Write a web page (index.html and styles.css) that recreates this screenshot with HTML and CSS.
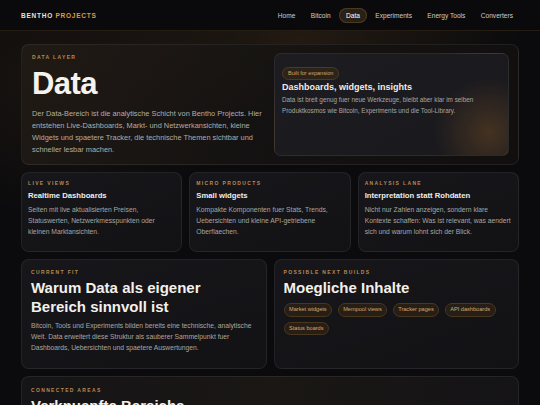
FILE: index.html
```html
<!DOCTYPE html>
<html lang="de">
<head>
<meta charset="utf-8">
<title>Data - Bentho Projects</title>
<link rel="stylesheet" href="styles.css">
</head>
<body>
<header class="topbar">
  <div class="brand">BENTHO <span class="brand-accent">PROJECTS</span></div>
  <nav class="nav">
    <a class="nav-link">Home</a>
    <a class="nav-link">Bitcoin</a>
    <a class="nav-link active">Data</a>
    <a class="nav-link">Experiments</a>
    <a class="nav-link">Energy Tools</a>
    <a class="nav-link">Converters</a>
  </nav>
</header>
<main class="page">
  <section class="card hero">
    <div class="hero-main">
      <div class="eyebrow">Data Layer</div>
      <h1 class="hero-title">Data</h1>
      <p class="hero-text">Der Data-Bereich ist die analytische Schicht von Bentho Projects. Hier entstehen Live-Dashboards, Markt- und Netzwerkansichten, kleine Widgets und spaetere Tracker, die technische Themen sichtbar und schneller lesbar machen.</p>
    </div>
    <div class="hero-side">
      <span class="badge">Built for expansion</span>
      <h3 class="side-title">Dashboards, widgets, insights</h3>
      <p class="side-text">Data ist breit genug fuer neue Werkzeuge, bleibt aber klar im selben Produktkosmos wie Bitcoin, Experiments und die Tool-Library.</p>
    </div>
  </section>

  <section class="trio">
    <article class="card mini">
      <div class="eyebrow">Live Views</div>
      <h3 class="mini-title">Realtime Dashboards</h3>
      <p class="mini-text">Seiten mit live aktualisierten Preisen, Statuswerten, Netzwerkmesspunkten oder kleinen Marktansichten.</p>
    </article>
    <article class="card mini">
      <div class="eyebrow">Micro Products</div>
      <h3 class="mini-title">Small widgets</h3>
      <p class="mini-text">Kompakte Komponenten fuer Stats, Trends, Uebersichten und kleine API-getriebene Oberflaechen.</p>
    </article>
    <article class="card mini">
      <div class="eyebrow">Analysis Lane</div>
      <h3 class="mini-title">Interpretation statt Rohdaten</h3>
      <p class="mini-text">Nicht nur Zahlen anzeigen, sondern klare Kontexte schaffen: Was ist relevant, was aendert sich und warum lohnt sich der Blick.</p>
    </article>
  </section>

  <section class="duo">
    <article class="card block">
      <div class="eyebrow">Current Fit</div>
      <h2 class="block-title">Warum Data als eigener Bereich sinnvoll ist</h2>
      <p class="block-text">Bitcoin, Tools und Experiments bilden bereits eine technische, analytische Welt. Data erweitert diese Struktur als sauberer Sammelpunkt fuer Dashboards, Uebersichten und spaetere Auswertungen.</p>
    </article>
    <article class="card block">
      <div class="eyebrow">Possible Next Builds</div>
      <h2 class="block-title">Moegliche Inhalte</h2>
      <div class="chips">
        <span class="chip">Market widgets</span>
        <span class="chip">Mempool views</span>
        <span class="chip">Tracker pages</span>
        <span class="chip">API dashboards</span>
        <span class="chip">Status boards</span>
      </div>
    </article>
  </section>

  <section class="card block connected">
    <div class="eyebrow">Connected Areas</div>
    <h2 class="block-title">Verknuepfte Bereiche</h2>
    <p class="block-text">Data greift auf Inhalte aus Bitcoin, Experiments und Energy Tools zurueck und verbindet sie zu lesbaren Ansichten.</p>
  </section>
</main>
</body>
</html>
```

FILE: styles.css
```css
* {
  box-sizing: border-box;
}

html, body {
  margin: 0;
  padding: 0;
}

body {
  font-family: "Liberation Sans", Arial, sans-serif;
  color: #ece9e4;
  background:
    radial-gradient(ellipse 320px 160px at 300px 40px, rgba(120, 80, 35, 0.22), rgba(0, 0, 0, 0) 70%),
    radial-gradient(ellipse 260px 200px at 60px 80px, rgba(90, 60, 30, 0.18), rgba(0, 0, 0, 0) 70%),
    #0b0b0d;
  min-height: 405px;
}

/* ---------- header ---------- */
.topbar {
  height: 31px;
  display: flex;
  align-items: center;
  justify-content: space-between;
  padding: 0 20px 0 21px;
  background: #0a0a0c;
  border-bottom: 1px solid #251d14;
}

.brand {
  font-size: 6.5px;
  font-weight: 700;
  letter-spacing: 0.75px;
  color: #e6e3de;
}

.brand-accent {
  color: #e29a3b;
}

.nav {
  display: flex;
  align-items: center;
  gap: 1.4px;
}

.nav-link {
  font-size: 6.6px;
  color: #cfccc6;
  padding: 0 7px;
  height: 15px;
  border-radius: 8px;
  display: flex;
  align-items: center;
}

.nav-link.active {
  color: #ffffff;
  background: #2a2116;
  box-shadow: inset 0 0 0 1px #4b3a22;
}

/* ---------- page ---------- */
.page {
  padding: 13px 21px 0 21px;
  display: flex;
  flex-direction: column;
  gap: 7px;
}

.card {
  border-radius: 8px;
  border: 1px solid rgba(255, 255, 255, 0.07);
  background: linear-gradient(160deg, #17161a 0%, #121215 100%);
}

.eyebrow {
  font-size: 5px;
  line-height: 9px;
  font-weight: 700;
  letter-spacing: 1.35px;
  text-transform: uppercase;
  color: #b98a52;
}

/* ---------- hero ---------- */
.hero {
  display: grid;
  grid-template-columns: 1fr 1fr;
  gap: 8px;
  padding: 8px 9px 8px 9px;
  background:
    linear-gradient(120deg, rgba(34, 28, 22, 0.9) 0%, rgba(20, 18, 18, 0.9) 55%, rgba(18, 16, 15, 0.9) 100%);
}

.hero-main {
  padding-left: 1px;
}

.hero-title {
  margin: 6px 0 0 0;
  font-size: 31px;
  line-height: 31px;
  font-weight: 700;
  letter-spacing: -0.6px;
  color: #f6f3ee;
}

.hero-text {
  margin: 9px 0 0 0;
  font-size: 7.4px;
  line-height: 12px;
  color: #b2aea7;
}

.hero-side {
  border-radius: 7px;
  border: 1px solid rgba(255, 255, 255, 0.07);
  padding: 7px 7px;
  background:
    radial-gradient(circle 55px at 92% 78%, rgba(190, 120, 45, 0.26), rgba(0, 0, 0, 0) 100%),
    linear-gradient(150deg, #1d1c20 0%, #19191d 100%);
}

.badge {
  display: inline-block;
  height: 13px;
  line-height: 11px;
  padding: 0 5px;
  font-size: 5.5px;
  color: #d7a468;
  background: #2d2318;
  border: 1px solid #4d3a22;
  border-radius: 7px;
}

.side-title {
  margin: 2px 0 0 0;
  font-size: 9px;
  line-height: 11px;
  font-weight: 700;
  color: #f0ede8;
}

.side-text {
  margin: 2px 0 0 0;
  font-size: 6.35px;
  line-height: 10.7px;
  color: #aaa6a0;
}

/* ---------- trio ---------- */
.trio {
  display: grid;
  grid-template-columns: 1fr 1fr 1fr;
  gap: 7px;
}

.mini {
  padding: 6px 6px 14px 6px;
}

.mini-title {
  margin: 2px 0 0 0;
  font-size: 7.7px;
  line-height: 11px;
  font-weight: 700;
  color: #f0ede8;
}

.mini-text {
  margin: 3px 0 0 0;
  font-size: 6.75px;
  line-height: 11px;
  color: #a9a5a0;
}

/* ---------- duo ---------- */
.duo {
  display: grid;
  grid-template-columns: 1fr 1fr;
  gap: 7px;
}

.block {
  padding: 8px 9px 15px 9px;
}

.block-title {
  margin: 1px 0 0 0;
  font-size: 15px;
  line-height: 19.4px;
  font-weight: 700;
  color: #f3f0eb;
}

.block-text {
  margin: 3px 0 0 0;
  font-size: 6.75px;
  line-height: 11.2px;
  color: #aaa6a0;
}

.chips {
  margin-top: 6px;
  display: flex;
  flex-wrap: wrap;
  gap: 5px 5.5px;
}

.chip {
  height: 13.3px;
  line-height: 11.3px;
  padding: 0 4.5px;
  font-size: 5.6px;
  color: #d4a871;
  background: #271f16;
  border: 1px solid #47371f;
  border-radius: 7px;
}

.connected {
  padding-top: 9px;
  background: linear-gradient(100deg, #151417 0%, #1a1714 50%, #141316 100%);
}
```
